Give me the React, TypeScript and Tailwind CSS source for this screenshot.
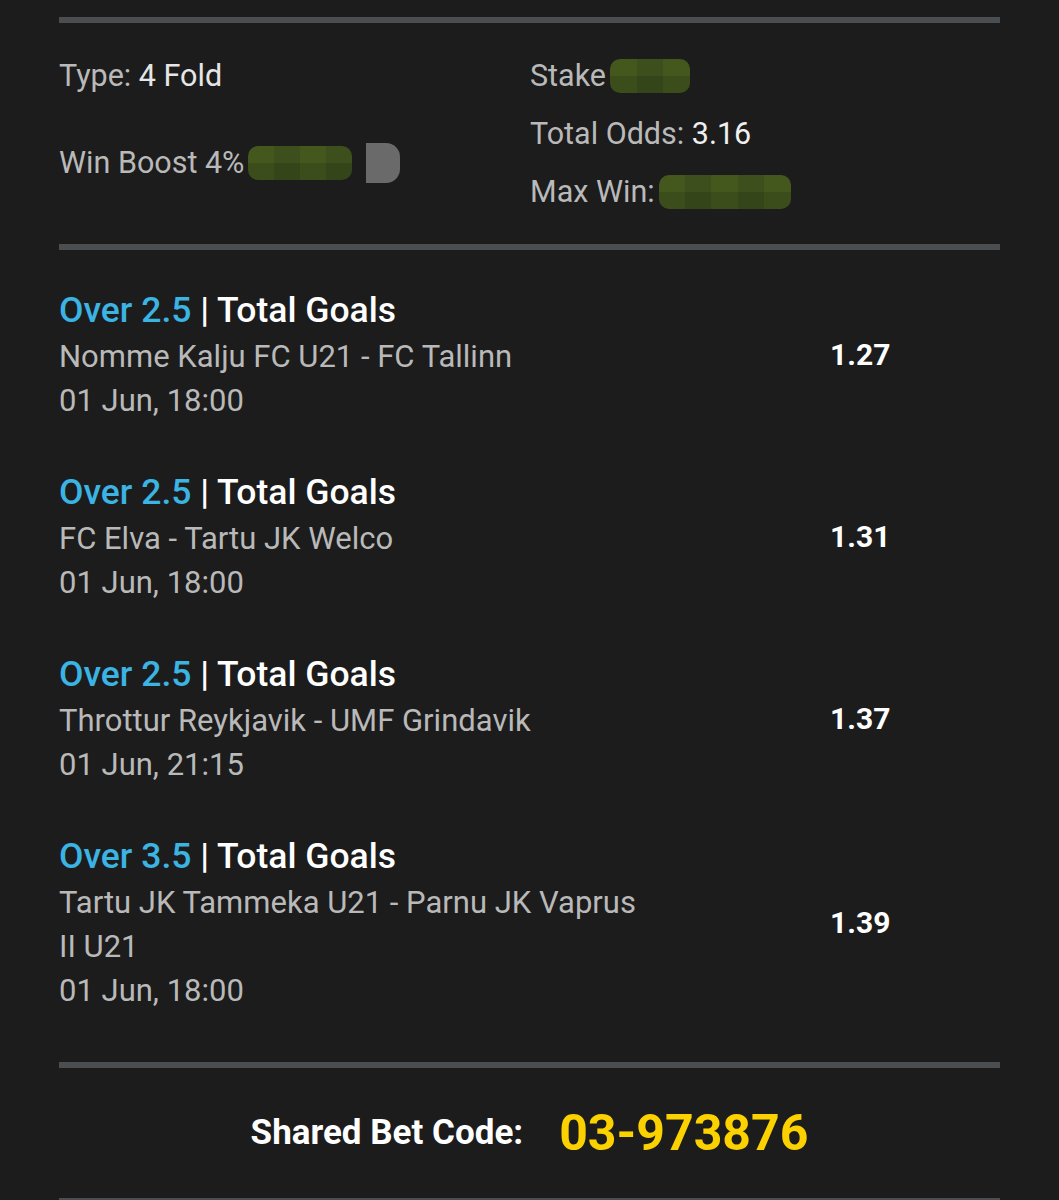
import React from 'react';

const selections = [
  { line: 'Over 2.5', teams: ['Nomme Kalju FC U21 - FC Tallinn'], date: '01 Jun, 18:00', odds: '1.27' },
  { line: 'Over 2.5', teams: ['FC Elva - Tartu JK Welco'], date: '01 Jun, 18:00', odds: '1.31' },
  { line: 'Over 2.5', teams: ['Throttur Reykjavik - UMF Grindavik'], date: '01 Jun, 21:15', odds: '1.37' },
  { line: 'Over 3.5', teams: ['Tartu JK Tammeka U21 - Parnu JK Vaprus', 'II U21'], date: '01 Jun, 18:00', odds: '1.39' }
];

function Redacted({ width }: { width: number }) {
  const cells = Math.max(1, Math.round(width / 26));
  return (
    <span className="ml-1 inline-flex h-[34px] overflow-hidden rounded-[10px]" style={{ width }}>
      {Array.from({ length: cells }).map((_, i) => (
        <span key={i} className="flex flex-1 flex-col">
          <span className={`flex-1 ${i % 2 ? 'bg-[#3d4f1c]' : 'bg-[#44581d]'}`} />
          <span className={`flex-1 ${i % 2 ? 'bg-[#34451a]' : 'bg-[#3b4d1b]'}`} />
        </span>
      ))}
    </span>
  );
}

function Divider() {
  return <div className="h-[6px] w-full bg-[#4a4e51]" />;
}

export default function App() {
  return (
    <div className="min-h-[1200px] w-full bg-[#1c1c1c] text-[#b9b9b9]" style={{ fontFamily: 'Roboto, "Noto Sans", sans-serif' }}>
      <div className="mx-[59px] pt-[17px]">
        <Divider />

        <div className="grid grid-cols-[471px_1fr] pt-[24px] pb-[23px] text-[30.5px]">
          <div>
            <div className="leading-[58px]">
              Type: <span className="text-[#e6e6e6]">4 Fold</span>
            </div>
            <div className="mt-[29px] flex items-center leading-[58px]">
              Win Boost 4%
              <Redacted width={104} />
              <span className="ml-[14px] h-[40px] w-[34px] rounded-r-[14px] bg-[#6a6a6a]" />
            </div>
          </div>
          <div>
            <div className="flex items-center leading-[58px]">
              Stake
              <Redacted width={80} />
            </div>
            <div className="leading-[58px]">
              Total Odds: <span className="text-[#f0f0f0]">3.16</span>
            </div>
            <div className="flex items-center leading-[58px]">
              Max Win:
              <Redacted width={132} />
            </div>
          </div>
        </div>

        <Divider />

        <div className="pt-[35px] pb-[49px]">
          {selections.map((s, i) => (
            <div key={i} className={`flex items-center ${i > 0 ? 'mt-[44px]' : ''}`}>
              <div className="w-[771px]">
                <div className="text-[35.5px] font-medium leading-[50px]">
                  <span className="text-[#3bb3e3]">{s.line}</span>
                  <span className="text-white"> | Total Goals</span>
                </div>
                {s.teams.map((t) => (
                  <div key={t} className="text-[31px] leading-[44px]">
                    {t}
                  </div>
                ))}
                <div className="text-[31px] leading-[44px]">{s.date}</div>
              </div>
              <div className="text-[30px] font-bold text-white">{s.odds}</div>
            </div>
          ))}
        </div>

        <Divider />

        <div className="flex h-[130px] items-center justify-center gap-[36px]">
          <span className="text-[35px] font-bold text-white">Shared Bet Code:</span>
          <span className="text-[50px] font-bold text-[#fcd100]">03-973876</span>
        </div>

        <Divider />
      </div>
    </div>
  );
}
